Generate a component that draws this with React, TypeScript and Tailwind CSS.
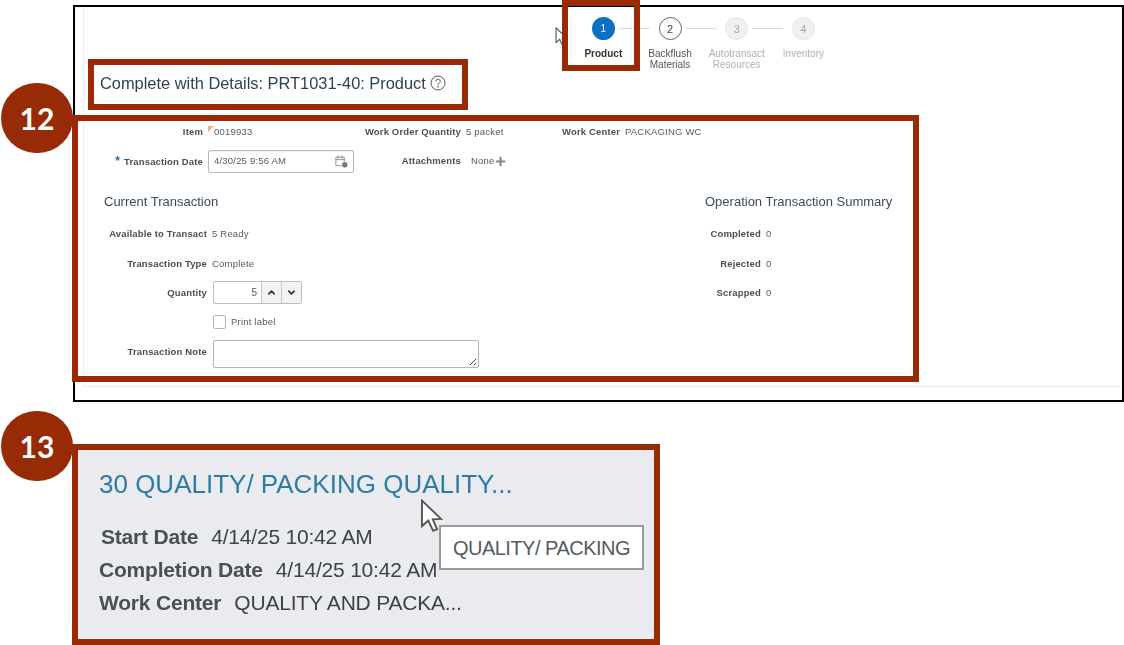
import React from "react";
import { ChevronDown, ChevronUp, Plus } from "lucide-react";

const steps = [
  { n: 1, label: ["Product"], state: "active" },
  { n: 2, label: ["Backflush", "Materials"], state: "next" },
  { n: 3, label: ["Autotransact", "Resources"], state: "off" },
  { n: 4, label: ["Inventory"], state: "off" },
];

const Label = ({ children, w }: { children: React.ReactNode; w: string }) => (
  <span className={`${w} shrink-0 text-right text-[9.5px] font-bold tracking-[0.15px] text-[#4a4f55]`}>
    {children}
  </span>
);

const Value = ({ children }: { children: React.ReactNode }) => (
  <span className="text-[9.5px] tracking-[0.2px] text-[#555a60]">{children}</span>
);

const Cursor = ({ className }: { className: string }) => (
  <svg viewBox="0 0 14 22" className={className} fill="#fff" stroke="#555" strokeWidth="1.2">
    <path d="M1 1 L1 17 L5 13.5 L8 20 L10.5 19 L7.8 12.8 L13 12.5 Z" />
  </svg>
);

const Badge = ({ text, className }: { text: string; className: string }) => (
  <div
    className={`absolute flex h-[70px] w-[72px] items-center justify-center rounded-full bg-[#962b05] font-['Lato',sans-serif] text-[30px] font-bold text-white ${className}`}
  >
    {text}
  </div>
);

export default function App() {
  return (
    <div className="relative h-[645px] w-[1124px] overflow-hidden bg-white font-['Liberation_Sans',sans-serif] text-[9.5px] leading-[14px]">
      {/* Screenshot frame */}
      <div className="ml-[73px] mt-[5px] h-[397px] w-[1051px] border-2 border-black bg-white">
        <div className="ml-[8px] h-[380px] border-b border-l border-[#ececec] pl-[1px] blur-[0.3px]">
          {/* Train stepper */}
          <div className="ml-[485px] flex pt-[10px]">
            {steps.map((s, i) => (
              <div key={s.n} className="relative flex w-[66.7px] flex-col items-center">
                <div
                  className={
                    s.state === "active"
                      ? "flex h-[23px] w-[23px] items-center justify-center rounded-full bg-[#0b6fc4] text-[10px] text-white"
                      : s.state === "next"
                        ? "flex h-[23px] w-[23px] items-center justify-center rounded-full border border-[#666] bg-white text-[11px] text-[#444]"
                        : "flex h-[23px] w-[23px] items-center justify-center rounded-full border border-[#e6e6e6] bg-[#f0f0f0] text-[11px] text-[#a8a8a8]"
                  }
                >
                  {s.n}
                </div>
                {i < 3 && (
                  <div className="absolute left-[49px] top-[11px] h-px w-[31px] bg-[#dcdcdc]" />
                )}
                <div
                  className={`mt-[8px] whitespace-nowrap text-center text-[10px] leading-[11px] ${
                    s.state === "active"
                      ? "font-bold text-[#333]"
                      : s.state === "next"
                        ? "text-[#555]"
                        : "text-[#b0b0b0]"
                  }`}
                >
                  {s.label.map((l) => (
                    <div key={l}>{l}</div>
                  ))}
                </div>
              </div>
            ))}
          </div>

          {/* Page title */}
          <div className="mt-[3px] flex items-center pl-[15px]">
            <h1 className="text-[16.4px] font-normal leading-[20px] text-[#2f3f52]">
              Complete with Details: PRT1031-40: Product
            </h1>
            <svg viewBox="0 0 16 16" className="ml-[4px] h-[16px] w-[16px]" fill="none" stroke="#555" strokeWidth="1">
              <circle cx="8" cy="8" r="7" />
              <path d="M5.8 6.4a2.2 2.2 0 1 1 3.3 1.9c-.8.4-1.1.8-1.1 1.6" />
              <circle cx="8" cy="11.8" r=".4" fill="#555" />
            </svg>
          </div>

          {/* Header fields */}
          <div className="mt-[32px] flex h-[14px] items-center">
            <Label w="w-[118px]">Item</Label>
            <span className="relative ml-[5px] w-[114px] pl-[6px]">
              <span className="absolute left-0 top-[1px] h-0 w-0 border-r-[6px] border-t-[6px] border-r-transparent border-t-[#f4b183]" />
              <Value>0019933</Value>
            </span>
            <Label w="w-[139px]">Work Order Quantity</Label>
            <span className="ml-[5px] w-[95px]">
              <Value>5 packet</Value>
            </span>
            <Label w="w-[59px]">Work Center</Label>
            <span className="ml-[5px]">
              <Value>PACKAGING WC</Value>
            </span>
          </div>

          <div className="mt-[11px] flex h-[22px] items-center">
            <Label w="w-[118px]">
              <span className="mr-[4px] text-[12px] text-[#1c6fa8]">*</span>Transaction Date
            </Label>
            <div className="ml-[5px] flex h-[23px] w-[146px] items-center justify-between rounded-[2px] border border-[#b9b9b9] pl-[5px] pr-[4px] shadow-[inset_0_1px_1px_#eee]">
              <Value>4/30/25 9:56 AM</Value>
              <svg viewBox="0 0 16 16" className="h-[15px] w-[15px]" fill="none" stroke="#8a8a8a" strokeWidth="1">
                <path d="M2 3.5h9v9H2zM4.5 1.5v3M8.5 1.5v3M2 6h9" />
                <circle cx="11.5" cy="11.5" r="3.5" fill="#777" stroke="#fff" />
              </svg>
            </div>
            <Label w="w-[107px]">Attachments</Label>
            <span className="ml-[10px] flex items-center">
              <Value>None</Value>
              <Plus className="-ml-[1px] h-[13px] w-[13px] text-[#888]" strokeWidth={4} />
            </span>
          </div>

          {/* Two sections */}
          <div className="mt-[22px] flex">
            <div className="w-[620px]">
              <h2 className="pl-[19px] text-[13px] font-normal leading-[16px] text-[#3a4a5c]">
                Current Transaction
              </h2>
              <div className="mt-[17px] flex h-[14px] items-center">
                <Label w="w-[122px]">Available to Transact</Label>
                <span className="ml-[5px]">
                  <Value>5 Ready</Value>
                </span>
              </div>
              <div className="mt-[16px] flex h-[14px] items-center">
                <Label w="w-[122px]">Transaction Type</Label>
                <span className="ml-[5px]">
                  <Value>Complete</Value>
                </span>
              </div>
              <div className="mt-[10px] flex h-[23px] items-center">
                <Label w="w-[122px]">Quantity</Label>
                <div className="ml-[6px] flex h-[23px] items-stretch overflow-hidden rounded-[2px] border border-[#bdbdbd]">
                  <div className="flex w-[47px] items-center justify-end pr-[4px] text-[10px] text-[#555a60]">5</div>
                  <div className="flex w-[20px] items-center justify-center border-l border-[#c8c8c8] bg-[#f0f2f3]">
                    <ChevronUp className="h-[11px] w-[11px] text-[#333]" strokeWidth={3.5} />
                  </div>
                  <div className="flex w-[20px] items-center justify-center border-l border-[#c8c8c8] bg-[#f0f2f3]">
                    <ChevronDown className="h-[11px] w-[11px] text-[#333]" strokeWidth={3.5} />
                  </div>
                </div>
              </div>
              <div className="mt-[11px] flex h-[13px] items-center pl-[128px]">
                <div className="h-[14px] w-[13px] rounded-[2px] border border-[#b5b5b5]" />
                <span className="ml-[5px]">
                  <Value>Print label</Value>
                </span>
              </div>
              <div className="mt-[12px] flex items-start">
                <div className="mt-[5px]">
                  <Label w="inline-block w-[122px]">Transaction Note</Label>
                </div>
                <div className="relative ml-[6px] h-[28px] w-[266px] rounded-[2px] border border-[#b5b5b5]">
                  <svg viewBox="0 0 8 8" className="absolute bottom-[1px] right-[1px] h-[8px] w-[8px]" stroke="#444" strokeWidth="1">
                    <path d="M1 7 7 1M5 7 7 5" />
                  </svg>
                </div>
              </div>
            </div>
            <div>
              <h2 className="whitespace-nowrap text-[13px] font-normal leading-[16px] text-[#3a4a5c]">
                Operation Transaction Summary
              </h2>
              <div className="mt-[17px] flex h-[14px] items-center">
                <Label w="w-[56px]">Completed</Label>
                <span className="ml-[5px]">
                  <Value>0</Value>
                </span>
              </div>
              <div className="mt-[16px] flex h-[14px] items-center">
                <Label w="w-[56px]">Rejected</Label>
                <span className="ml-[5px]">
                  <Value>0</Value>
                </span>
              </div>
              <div className="mt-[15px] flex h-[14px] items-center">
                <Label w="w-[56px]">Scrapped</Label>
                <span className="ml-[5px]">
                  <Value>0</Value>
                </span>
              </div>
            </div>
          </div>
        </div>
      </div>

      {/* Second screenshot */}
      <div className="ml-[72px] mt-[42px] h-[201px] w-[588px] border-[6px] border-[#962b05] bg-[#e9ebee] pl-[21px] pt-[18px]">
        <div className="blur-[0.4px]">
          <div className="text-[26px] leading-[32px] text-[#2f7ba6]">
            30 QUALITY/ PACKING QUALITY...
          </div>
          <div className="mt-[20px] text-[21px] leading-[33px] tracking-[-0.2px] text-[#3f4347]">
            <div className="pl-[2px]">
              <span className="font-bold text-[#4b4f53]">Start Date</span>
              <span className="ml-[13px]">4/14/25 10:42 AM</span>
            </div>
            <div>
              <span className="font-bold text-[#4b4f53]">Completion Date</span>
              <span className="ml-[13px]">4/14/25 10:42 AM</span>
            </div>
            <div>
              <span className="font-bold text-[#4b4f53]">Work Center</span>
              <span className="ml-[13px]">QUALITY AND PACKA...</span>
            </div>
          </div>
        </div>
      </div>

      {/* Tooltip and cursors */}
      <div className="absolute left-[439px] top-[525px] flex h-[45px] w-[205px] items-center justify-center border-2 border-[#9a9a9a] bg-white text-[20px] leading-[24px] tracking-[-0.5px] text-[#555a60]">
        QUALITY/ PACKING
      </div>
      <Cursor className="absolute left-[420px] top-[499px] h-[35px] w-[23px]" />
      <Cursor className="absolute left-[555px] top-[27px] h-[20px] w-[13px]" />

      {/* Annotation callouts */}
      <div className="absolute left-[562px] top-0 h-[71px] w-[78px] border-[6px] border-[#962b05]" />
      <div className="absolute left-[88px] top-[59px] h-[51px] w-[380px] border-[6px] border-[#962b05]" />
      <div className="absolute left-[72px] top-[115px] h-[267px] w-[847px] border-[6px] border-[#962b05]" />
      <Badge text="12" className="left-[1px] top-[83px]" />
      <Badge text="13" className="left-[1px] top-[411px]" />
    </div>
  );
}
